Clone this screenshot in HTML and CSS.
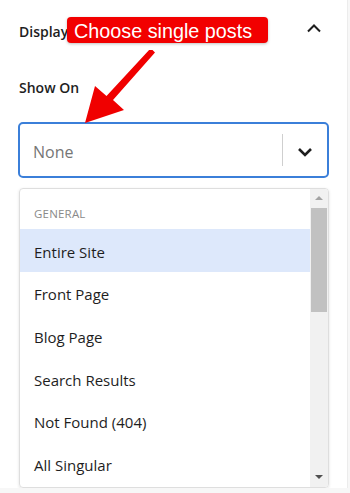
FILE: index.html
```html
<!DOCTYPE html>
<html lang="en">
<head>
<meta charset="utf-8">
<title>Display Rules</title>
<link rel="stylesheet" href="styles.css">
</head>
<body>
<div class="panel">
  <div class="section-head">
    <span class="section-title">Display Rules</span>
    <svg class="chev-up" width="16" height="10" viewBox="0 0 16 10"><path d="M2 8.5 L8 2.5 L14 8.5" fill="none" stroke="#1e1e1e" stroke-width="2"/></svg>
  </div>
  <div class="field-label">Show On</div>
  <div class="select">
    <span class="placeholder">None</span>
    <span class="sep"></span>
    <svg class="chev-down" width="16" height="10" viewBox="0 0 16 10"><path d="M2 2 L8 8 L14 2" fill="none" stroke="#1e1e1e" stroke-width="2.6"/></svg>
  </div>
  <div class="menu">
    <div class="options">
      <div class="group">GENERAL</div>
      <div class="opt active">Entire Site</div>
      <div class="opt">Front Page</div>
      <div class="opt">Blog Page</div>
      <div class="opt">Search Results</div>
      <div class="opt">Not Found (404)</div>
      <div class="opt">All Singular</div>
    </div>
    <div class="scrollbar">
      <span class="sb-up"></span>
      <span class="sb-thumb"></span>
      <span class="sb-down"></span>
    </div>
  </div>

  <div class="callout">Choose single posts</div>
  <svg class="arrow" width="90" height="90" viewBox="0 0 90 90">
    <polygon points="77.5,0 80,2.5 38,50 49,60 10,73 20,36 31.5,46 75,-1" fill="#f00000"/>
  </svg>
</div>
</body>
</html>
```
FILE: styles.css
```css
* { box-sizing: border-box; }
html, body { margin: 0; padding: 0; }
body {
  background: #f7f7f7;
  font-family: "Open Sans", "Noto Sans", sans-serif;
  color: #1e1e1e;
}
.panel {
  position: relative;
  width: 348px;
  height: 488px;
  background: #fff;
  border-right: 1px solid #ececec;
  padding: 0 18px 0 18px;
  overflow: hidden;
}
.section-head {
  display: flex;
  align-items: center;
  justify-content: space-between;
  height: 63px;
  padding: 0 7px 0 1px;
}
.section-title {
  font-size: 14px;
  font-weight: 600;
  color: #1e1e1e;
}
.chev-up { margin-top: -8px; }
.field-label {
  font-size: 14px;
  font-weight: 600;
  padding-left: 1px;
  margin-top: 15px;
  line-height: 20px;
}
.select {
  margin-top: 24px;
  height: 56px;
  border: 2px solid #3b7fd9;
  border-radius: 5px;
  display: flex;
  align-items: center;
  padding: 0 14px 0 13px;
}
.placeholder {
  flex: 1;
  font-size: 16px;
  color: #767676;
  padding-top: 4px;
}
.sep {
  width: 1px;
  height: 32px;
  background: #cfcfcf;
  margin-right: 14px;
}
.chev-down { display: block; margin-top: 3px; }
.menu {
  margin: 10px 0 0 1px;
  height: 300px;
  border: 1px solid #dedede;
  border-radius: 4px;
  box-shadow: 0 1px 3px rgba(0,0,0,0.12);
  display: flex;
  overflow: hidden;
}
.options {
  flex: 1;
  min-width: 0;
}
.group {
  height: 40px;
  padding: 18px 0 0 14px;
  font-size: 11.5px;
  color: #8a8a8a;
  letter-spacing: 0.2px;
  line-height: 14px;
}
.opt {
  height: 42.6px;
  display: flex;
  align-items: center;
  padding: 3px 0 0 14px;
  font-size: 15px;
  color: #1e1e1e;
}
.opt.active { background: #dde8fb; }
.scrollbar {
  width: 18px;
  background: #f1f1f1;
  position: relative;
  display: flex;
  flex-direction: column;
  align-items: center;
}
.sb-up {
  margin-top: 7px;
  width: 0; height: 0;
  border-left: 4px solid transparent;
  border-right: 4px solid transparent;
  border-bottom: 4px solid #a3a3a3;
}
.sb-thumb {
  margin-top: 8px;
  width: 16px;
  height: 104px;
  background: #c1c1c1;
}
.sb-down {
  margin-top: auto;
  margin-bottom: 8px;
  width: 0; height: 0;
  border-left: 4px solid transparent;
  border-right: 4px solid transparent;
  border-top: 4px solid #505050;
}
.callout {
  position: absolute;
  left: 67px;
  top: 17px;
  width: 201px;
  height: 26px;
  background: #f20000;
  border-radius: 4px;
  box-shadow: 0 1px 3px rgba(0,0,0,0.25);
  color: #fff;
  font-family: "Liberation Sans", Arial, sans-serif;
  font-size: 19.8px;
  line-height: 28px;
  padding-left: 7px;
  white-space: nowrap;
}
.arrow {
  position: absolute;
  left: 75px;
  top: 50px;
}
```
